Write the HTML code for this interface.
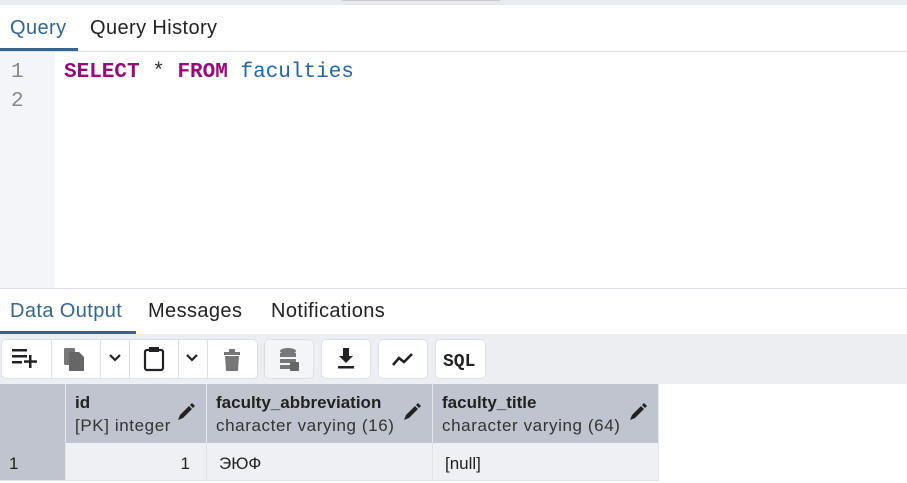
<!DOCTYPE html>
<html><head><meta charset="utf-8"><style>
*{box-sizing:border-box;margin:0;padding:0}
body{width:907px;height:483px;overflow:hidden;background:#fff;font-family:"Liberation Sans",sans-serif;position:relative;color:#222}
.abs{position:absolute}
.tab{position:absolute;font-size:20px;letter-spacing:0.4px;color:#222}
.code{font-family:"Liberation Mono",monospace;font-size:21px}
.btn{position:absolute;top:339px;height:40px;background:#fff;border:1px solid #dde0e6;border-radius:5px}
.hd{position:absolute;top:384px;height:59px;background:#bfc4cf;border-right:1px solid #e6e8ec}
.cell{position:absolute;top:443px;height:38px;background:#eef0f4;border-right:1px solid #e0e3e8;border-bottom:1px solid #e0e3e8;font-size:17px;padding-top:11px}
.t1{font-weight:bold;font-size:17px;position:absolute;top:9px;left:9px;color:#222}
.t2{font-size:17px;letter-spacing:0.6px;position:absolute;top:32px;left:9px;color:#333}
</style></head><body>
<div class="abs" style="left:0;top:0;width:907px;height:5px;background:#e8eaee"></div>
<div class="abs" style="left:342px;top:0;width:158px;height:1px;background:#ccc"></div>
<div class="tab" style="left:10px;top:17px;color:#326690">Query</div>
<div class="tab" style="left:90px;top:17px">Query History</div>
<div class="abs" style="left:0;top:48px;width:78px;height:3px;background:#326690"></div>
<div class="abs" style="left:0;top:51px;width:907px;height:1px;background:#dde0e6"></div>
<div class="abs" style="left:0;top:52px;width:55px;height:237px;background:#f3f5f9"></div>
<div class="abs code" style="left:11px;top:61px;color:#888">1</div>
<div class="abs code" style="left:11px;top:90px;color:#888">2</div>
<div class="abs code" style="left:64px;top:61px"><b style="color:#950b7a">SELECT</b> <span style="color:#333">*</span> <b style="color:#950b7a">FROM</b> <span style="color:#2464a8">faculties</span></div>
<div class="abs" style="left:0;top:288px;width:907px;height:1px;background:#dde0e6"></div>
<div class="tab" style="left:10px;top:300px;color:#326690">Data Output</div>
<div class="tab" style="left:148px;top:300px">Messages</div>
<div class="tab" style="left:271px;top:300px">Notifications</div>
<div class="abs" style="left:0;top:331px;width:136px;height:3px;background:#326690"></div>
<div class="abs" style="left:0;top:334px;width:907px;height:50px;background:#eceef2"></div>
<div class="btn" style="left:1px;width:257px"></div>
<div class="abs" style="left:51px;top:340px;width:1px;height:38px;background:#dde0e6"></div>
<div class="abs" style="left:100px;top:340px;width:1px;height:38px;background:#dde0e6"></div>
<div class="abs" style="left:129px;top:340px;width:1px;height:38px;background:#dde0e6"></div>
<div class="abs" style="left:178px;top:340px;width:1px;height:38px;background:#dde0e6"></div>
<div class="abs" style="left:207px;top:340px;width:1px;height:38px;background:#dde0e6"></div>
<div class="btn" style="left:264px;width:50px;background:#f4f5f7"></div>
<div class="btn" style="left:321px;width:50px"></div>
<div class="btn" style="left:378px;width:50px"></div>
<div class="btn" style="left:435px;width:51px"></div>
<svg class="abs" style="left:0;top:334px" width="500" height="50">
<g fill="#222"><rect x="12" y="15" width="15" height="2.5"/><rect x="12" y="21" width="15" height="2.5"/><rect x="12" y="27" width="10" height="2.5"/><rect x="29" y="21" width="2.5" height="13"/><rect x="24" y="26.3" width="13" height="2.5"/></g>
<g fill="#777"><rect x="64" y="14" width="11" height="17" rx="1.5"/><path d="M69 18h10l5 5v14h-15z" fill="#666"/></g>
<path d="M110 21l5 5 5-5" stroke="#222" stroke-width="2.2" fill="none"/>
<rect x="145" y="16" width="18" height="20" rx="2" fill="none" stroke="#222" stroke-width="2.2"/><rect x="149" y="13" width="10" height="5" fill="#222"/>
<path d="M187 21l5 5 5-5" stroke="#222" stroke-width="2.2" fill="none"/>
<g fill="#777"><rect x="224" y="18" width="16" height="3"/><rect x="229" y="15" width="6" height="3"/><path d="M225 22h14l-1 15h-12z"/></g>
<g fill="#777"><ellipse cx="288" cy="17" rx="8" ry="3"/><rect x="280" y="19" width="16" height="4"/><rect x="280" y="25" width="16" height="4"/><rect x="280" y="31" width="10" height="4"/><rect x="290" y="28" width="9" height="9" rx="1" fill="#666"/></g>
<g fill="#222"><path d="M343 14h6v8h4l-7 7-7-7h4z"/><rect x="338" y="32" width="16" height="2.5"/></g>
<path d="M393 31l6-7 5 4 8-8" stroke="#222" stroke-width="2.6" fill="none"/>
<text x="443" y="32" font-family="Liberation Mono,monospace" font-size="18" font-weight="bold" fill="#222">SQL</text>
</svg>
<div class="hd" style="left:0;width:66px"></div>
<div class="hd" style="left:66px;width:141px"><div class="t1">id</div><div class="t2">[PK] integer</div></div>
<div class="hd" style="left:207px;width:226px"><div class="t1">faculty_abbreviation</div><div class="t2">character varying (16)</div></div>
<div class="hd" style="left:433px;width:226px"><div class="t1">faculty_title</div><div class="t2">character varying (64)</div></div>
<svg class="abs" style="left:0;top:384px" width="660" height="60"><g fill="#222">
<path d="M178 36l2-5 9-9 3 3-9 9z M190 21l2-2 3 3-2 2z"/>
<path d="M404 36l2-5 9-9 3 3-9 9z M416 21l2-2 3 3-2 2z"/>
<path d="M630 36l2-5 9-9 3 3-9 9z M642 21l2-2 3 3-2 2z"/></g></svg>
<div class="cell" style="left:0;width:66px;background:#bfc4cf;padding-left:9px">1</div>
<div class="cell" style="left:66px;width:141px;text-align:right;padding-right:16px">1</div>
<div class="cell" style="left:207px;width:226px;padding-left:12px">ЭЮФ</div>
<div class="cell" style="left:433px;width:226px;padding-left:12px">[null]</div>
</body></html>
